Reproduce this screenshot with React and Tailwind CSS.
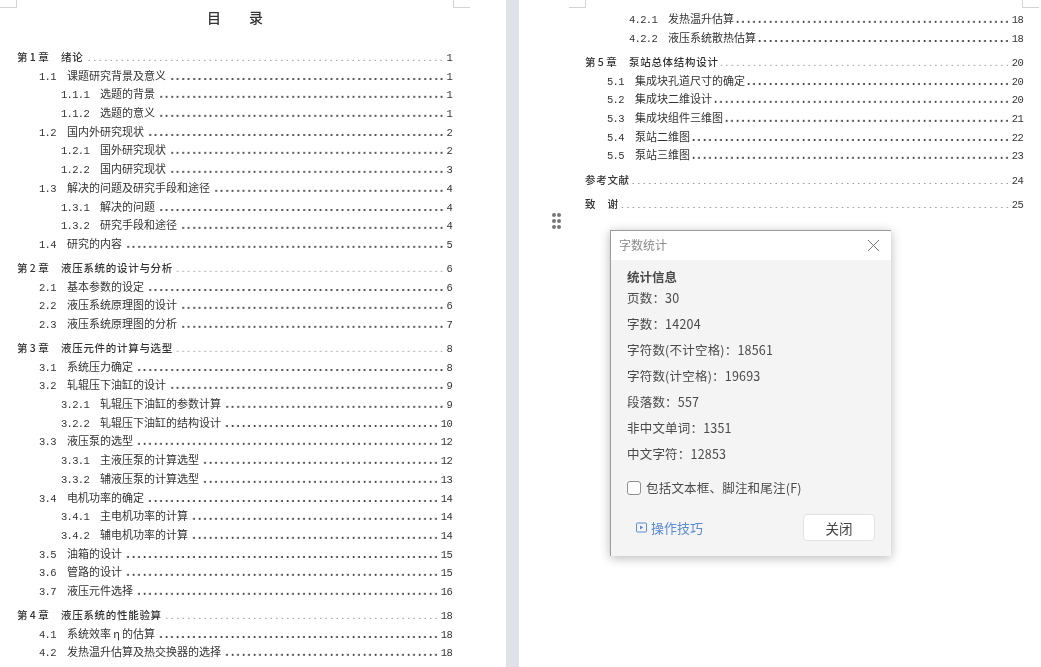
const SER = '"Noto Sans CJK SC", sans-serif';

const leftGroups = [
  [["c","第 1 章","绪论","1"],["s","1.1","课题研究背景及意义","1"],["t","1.1.1","选题的背景","1"],["t","1.1.2","选题的意义","1"],["s","1.2","国内外研究现状","2"],["t","1.2.1","国外研究现状","2"],["t","1.2.2","国内研究现状","3"],["s","1.3","解决的问题及研究手段和途径","4"],["t","1.3.1","解决的问题","4"],["t","1.3.2","研究手段和途径","4"],["s","1.4","研究的内容","5"]],
  [["c","第 2 章","液压系统的设计与分析","6"],["s","2.1","基本参数的设定","6"],["s","2.2","液压系统原理图的设计","6"],["s","2.3","液压系统原理图的分析","7"]],
  [["c","第 3 章","液压元件的计算与选型","8"],["s","3.1","系统压力确定","8"],["s","3.2","轧辊压下油缸的设计","9"],["t","3.2.1","轧辊压下油缸的参数计算","9"],["t","3.2.2","轧辊压下油缸的结构设计","10"],["s","3.3","液压泵的选型","12"],["t","3.3.1","主液压泵的计算选型","12"],["t","3.3.2","辅液压泵的计算选型","13"],["s","3.4","电机功率的确定","14"],["t","3.4.1","主电机功率的计算","14"],["t","3.4.2","辅电机功率的计算","14"],["s","3.5","油箱的设计","15"],["s","3.6","管路的设计","15"],["s","3.7","液压元件选择","16"]],
  [["c","第 4 章","液压系统的性能验算","18"],["s","4.1","系统效率\u2009η\u2009的估算","18"],["s","4.2","发热温升估算及热交换器的选择","18"]],
];
const rightGroups = [
  [["t","4.2.1","发热温升估算","18"],["t","4.2.2","液压系统散热估算","18"]],
  [["c","第 5 章","泵站总体结构设计","20"],["s","5.1","集成块孔道尺寸的确定","20"],["s","5.2","集成块二维设计","20"],["s","5.3","集成块组件三维图","21"],["s","5.4","泵站二维图","22"],["s","5.5","泵站三维图","23"]],
  [["c","","参考文献","24"]],
  [["c","","致　谢","25"]],
];

function Row({ r }) {
  const [k, num, title, page] = r;
  const chapter = k === "c";
  return (
    <div className={`flex h-[18.7px] items-baseline text-[11px] text-[#333] ${k === "s" ? "pl-[22px] leading-[17px]" : k === "t" ? "pl-[44px] leading-[17px]" : "leading-[18.7px]"}`}>
      {num && (
        <span className={chapter ? "w-[44px] shrink-0 text-[10.5px] font-medium" : k === "s" ? "w-[28px] shrink-0 font-['Liberation_Mono'] text-[10.5px] tracking-[-0.7px]" : "w-[39px] shrink-0 font-['Liberation_Mono'] text-[10.5px] tracking-[-0.7px]"}>{num}</span>
      )}
      <span className={`shrink-0 whitespace-pre ${chapter ? "text-[10.5px] font-medium tracking-[0.7px]" : ""}`}>{title}</span>
      <span className={`mx-[2px] min-w-0 flex-1 self-stretch bg-repeat-x bg-right bg-[length:11px_100%] ${chapter ? "bg-[radial-gradient(circle_at_2.75px_12.5px,#999_0.5px,transparent_1px),radial-gradient(circle_at_8.25px_12.5px,#999_0.5px,transparent_1px)]" : "bg-[radial-gradient(circle_at_2.75px_12px,#333_0.7px,transparent_1.2px),radial-gradient(circle_at_8.25px_12px,#333_0.7px,transparent_1.2px)]"}`} />
      <span className="shrink-0 font-['Liberation_Mono'] text-[10.5px] tracking-[-0.7px]">{page}</span>
    </div>
  );
}

function Corner({ className }) {
  return <div className={`absolute h-[8px] w-[17px] border-[#d4d4d4] ${className}`} />;
}

export default function App() {
  return (
    <div className="flex h-[667px] w-[1041px] overflow-hidden bg-white blur-[0.35px]" style={{ fontFamily: SER }}>
      <div className="relative w-[506px] shrink-0 bg-white pl-[17px] pr-[54px] pt-[48px]">
        <Corner className="left-0 top-0 border-b border-r" />
        <Corner className="left-[453px] top-0 border-b border-l" />
        <div className="absolute left-[207px] top-[9px] flex w-[56px] justify-between text-[14px] font-medium leading-[16px] text-[#333]"><span>目</span><span>录</span></div>
        <div className="flex flex-col gap-[5.35px]">
          {leftGroups.map((g, i) => <div key={i}>{g.map((r) => <Row key={r[1] + r[2]} r={r} />)}</div>)}
        </div>
      </div>

      <div className="w-[13px] shrink-0 bg-[#dde3e7]" />

      <div className="relative flex-1 bg-white pl-[66px] pr-[18px] pt-[10px]">
        <Corner className="left-[50px] top-0 border-b border-r" />
        <Corner className="left-[503px] top-0 border-b border-l" />
        <div className="flex flex-col gap-[5.5px]">
          {rightGroups.map((g, i) => <div key={i}>{g.map((r) => <Row key={r[1] + r[2]} r={r} />)}</div>)}
        </div>

        <div className="absolute left-[33px] top-[213px] grid grid-cols-2 gap-x-[1.5px] gap-y-[2.5px]">
          {[0,1,2,3,4,5].map((i) => <span key={i} className="h-[3.5px] w-[3.5px] rounded-full bg-[#777]" />)}
        </div>

        <div className="absolute left-[91px] top-[230px] w-[281px] border-l border-t border-[#9a9a9a] bg-[#f4f4f4] shadow-[0_2px_10px_rgba(0,0,0,0.28)]">
          <div className="flex h-[29px] items-center justify-between bg-white pl-[8px] pr-[11px] text-[12px] leading-[16px] text-[#8a8a8a]">
            <span className="-mt-[1px]">字数统计</span>
            <svg width="13" height="13" viewBox="0 0 13 13" fill="none" stroke="#777" strokeWidth="1"><path d="M1 1l11 11M12 1L1 12" /></svg>
          </div>
          <div className="px-[16px] pb-[15px] pt-[8px] text-[12.5px] leading-[18px] text-[#4a4a4a]">
            <div className="text-[12.5px] font-bold leading-[18px]">统计信息</div>
            <div className="mt-[3px] flex flex-col gap-[8px] tracking-[0.2px]">
              <div>页数：30</div>
              <div>字数：14204</div>
              <div>字符数(不计空格)：18561</div>
              <div>字符数(计空格)：19693</div>
              <div>段落数：557</div>
              <div>非中文单词：1351</div>
              <div>中文字符：12853</div>
            </div>
            <div className="mt-[16px] flex items-center gap-[5px]">
              <span className="h-[14px] w-[14px] rounded-[3px] border border-[#8f8f8f] bg-white" />
              <span className="tracking-[0.2px]">包括文本框、脚注和尾注(F)</span>
            </div>
            <div className="mt-[17px] flex items-center justify-between pl-[9px]">
              <div className="flex items-center gap-[4px] text-[#5b8ad6]">
                <svg width="11" height="11" viewBox="0 0 11 11" fill="none" stroke="#5b8ad6"><rect x="0.5" y="1" width="10" height="9" rx="1" /><path d="M4 3.5v4l3.2-2z" fill="#5b8ad6" stroke="none" /></svg>
                <span className="text-[13px]">操作技巧</span>
              </div>
              <button className="h-[27px] w-[72px] rounded-[4px] border border-[#e2e2e2] bg-white text-[13.5px] text-[#444]">关闭</button>
            </div>
          </div>
        </div>
      </div>
    </div>
  );
}
